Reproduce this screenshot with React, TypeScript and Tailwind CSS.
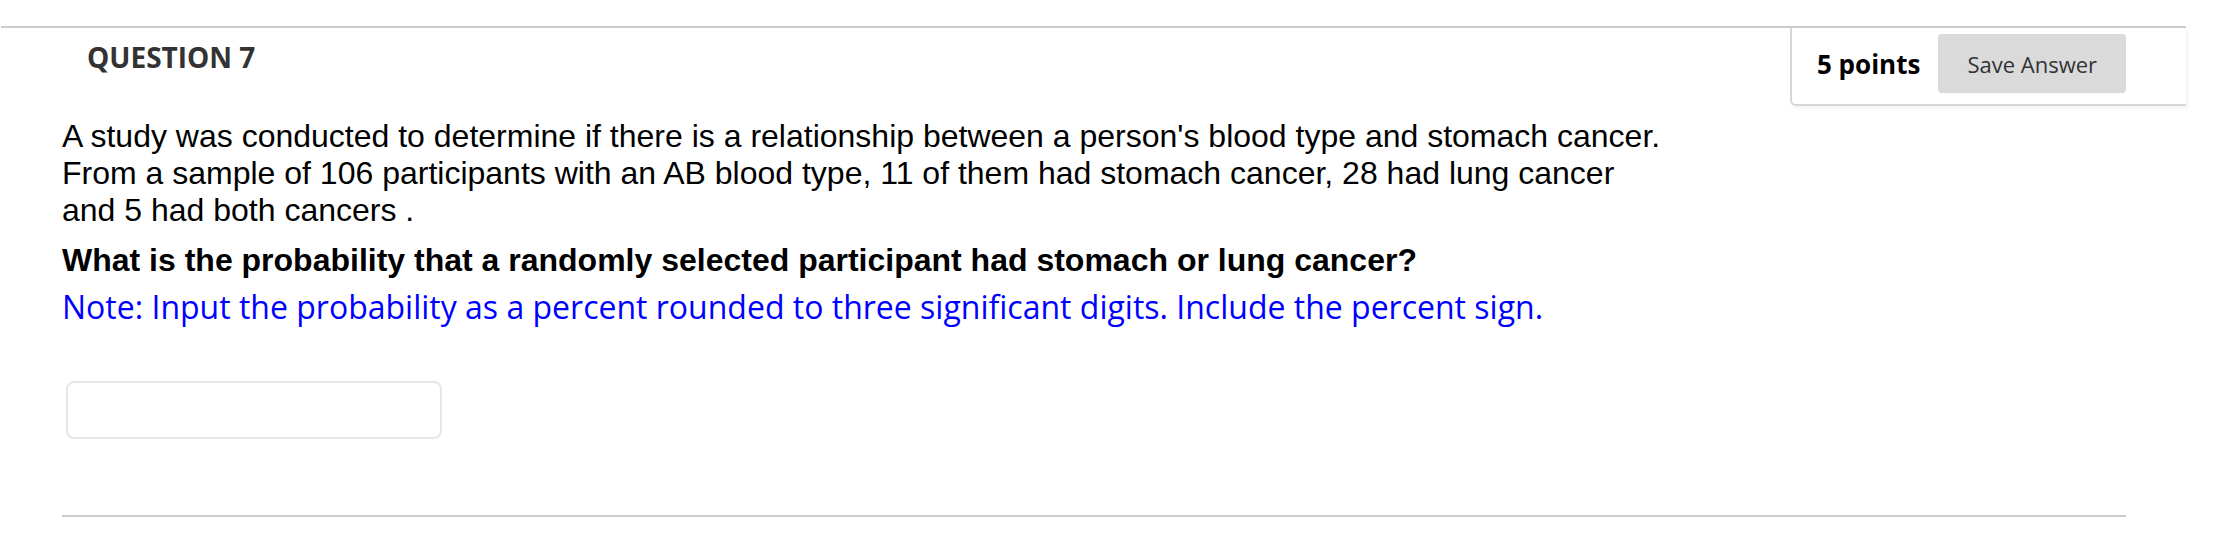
import React from "react";

export default function App() {
  return (
    <div className="w-[2216px] h-[534px] bg-white overflow-hidden">
      <div className="pt-[26px]">
        <div className="ml-px mr-[30px] h-[2px] bg-[#cccccc]" />
        <div className="flex items-start justify-between mr-[30px] h-[78px]">
          <h2
            className="ml-[87px] mt-[10px] text-[28px] leading-[38px] font-bold text-[#333333]"
            style={{ fontFamily: '"Open Sans", sans-serif' }}
          >
            QUESTION 7
          </h2>
          <div className="h-[78px] w-[396px] flex items-start pl-[25px] pt-[6px] border-l-2 border-b-2 border-[#d6d6d6] rounded-bl-[6px] shadow-[2px_2px_4px_rgba(0,0,0,0.06)]">
            <div className="flex items-center h-[59px] gap-[18px]">
              <span
                className="text-[26px] font-bold text-black leading-[36px]"
                style={{ fontFamily: '"Open Sans", sans-serif' }}
              >
                5 points
              </span>
              <button
                className="h-[59px] px-[29px] bg-[#dadada] rounded-[4px] text-[22px] text-[#333333] leading-[30px]"
                style={{ fontFamily: '"Open Sans", sans-serif' }}
              >
                Save Answer
              </button>
            </div>
          </div>
        </div>
        <div className="pl-[62px] pr-[60px]">
          <p
            className="mt-[12px] text-[32px] leading-[37px] text-black"
            style={{ fontFamily: '"Liberation Sans", Arial, sans-serif' }}
          >
            A study was conducted to determine if there is a relationship between a person's blood type and stomach cancer.
            <br />
            From a sample of 106 participants with an AB blood type, 11 of them had stomach cancer, 28 had lung cancer
            <br />
            and 5 had both cancers .
          </p>
          <p
            className="mt-[13px] text-[32px] leading-[37px] font-bold text-black"
            style={{ fontFamily: '"Liberation Sans", Arial, sans-serif' }}
          >
            What is the probability that a randomly selected participant had stomach or lung cancer?
          </p>
          <p
            className="mt-[9px] text-[32px] leading-[37px] text-[#0000ff]"
            style={{ fontFamily: '"Open Sans", sans-serif' }}
          >
            Note: Input the probability as a percent rounded to three significant digits. Include the percent sign.
          </p>
          <div className="mt-[56px] ml-[4px] w-[376px] h-[58px] border-2 border-[#e6e6e6] rounded-[8px] bg-white" />
          <div className="mt-[76px] w-[2064px] h-[2px] bg-[#cccccc]" />
        </div>
      </div>
    </div>
  );
}
